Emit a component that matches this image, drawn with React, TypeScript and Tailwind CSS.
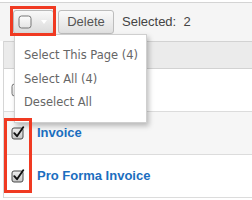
import React from "react";

function CheckedBox() {
  return (
    <svg width="14" height="14" viewBox="0 0 14 14" className="block">
      <defs>
        <linearGradient id="cbg" x1="0" y1="0" x2="0" y2="1">
          <stop offset="0" stopColor="#f2f2f2" />
          <stop offset="1" stopColor="#c4c4c4" />
        </linearGradient>
      </defs>
      <rect x="1" y="2" width="11" height="11" rx="2" fill="url(#cbg)" stroke="#4a4a4a" strokeWidth="1" />
      <path d="M3.3 7.2 L6 10.2 L12.2 1.2" fill="none" stroke="#111" strokeWidth="1.9" strokeLinecap="round" strokeLinejoin="round" />
    </svg>
  );
}

function EmptyBox() {
  return (
    <svg width="14" height="14" viewBox="0 0 14 14" className="block">
      <defs>
        <linearGradient id="ebg" x1="0" y1="0" x2="0" y2="1">
          <stop offset="0" stopColor="#fdfdfd" />
          <stop offset="1" stopColor="#e4e4e4" />
        </linearGradient>
      </defs>
      <rect x="1" y="1" width="12" height="12" rx="2.5" fill="url(#ebg)" stroke="#777" strokeWidth="1" />
    </svg>
  );
}

export default function App() {
  return (
    <div className="relative w-[252px] h-[200px] bg-white overflow-hidden" style={{ fontFamily: '"Liberation Sans", Arial, sans-serif' }}>
      <div className="pt-[2px]">
        {/* toolbar */}
        <div className="h-[39px] border-t border-[#d4d4d4] bg-[#f5f5f5] flex items-center pl-[13px]">
          <div className="w-[41px] h-[24px] rounded-[3px] border border-[#b9b9b9] bg-gradient-to-b from-[#f9f9f9] to-[#dadada] flex items-center pl-[4px] gap-[9px]">
            <EmptyBox />
            <div className="w-0 h-0 border-l-[3.5px] border-r-[3.5px] border-t-[4px] border-l-transparent border-r-transparent border-t-white" />
          </div>
          <div className="ml-[4px] w-[56px] h-[24px] rounded-[3px] border border-[#bdbdbd] bg-gradient-to-b from-[#fafafa] to-[#e0e0e0] flex items-center justify-center text-[13px] text-[#555]">
            Delete
          </div>
          <div className="ml-[8px] text-[13px] text-[#444]">Selected:&nbsp; 2</div>
        </div>
        {/* table */}
        <div className="ml-[3px] border-l border-[#d6d6d6]">
          <div className="h-[28px] border-t border-b border-[#d2d2d2] bg-[#ebebeb]" />
          <div className="h-[43px] border-b border-[#dcdcdc] bg-white flex items-center pl-[7px]">
            <EmptyBox />
          </div>
          <div className="h-[43px] border-b border-[#dcdcdc] bg-[#f6f6f6] flex items-center pl-[7px] gap-[12px]">
            <CheckedBox />
            <span className="text-[13px] font-bold text-[#1b6ebf]">Invoice</span>
          </div>
          <div className="h-[43px] border-b border-[#dcdcdc] bg-white flex items-center pl-[7px] gap-[12px]">
            <CheckedBox />
            <span className="text-[13px] font-bold text-[#1b6ebf]">Pro Forma Invoice</span>
          </div>
        </div>
      </div>

      {/* dropdown menu */}
      <div
        className="absolute left-[14px] top-[34px] w-[133px] h-[89px] bg-white border border-[#cfcfcf] shadow-[2px_3px_5px_rgba(0,0,0,0.25)] pt-[9px] text-[11.5px] text-[#666]"
        style={{ fontFamily: '"DejaVu Sans", sans-serif' }}
      >
        <div className="h-[23.5px] flex items-center pl-[9px]">Select This Page (4)</div>
        <div className="h-[23.5px] flex items-center pl-[9px]">Select All (4)</div>
        <div className="h-[23.5px] flex items-center pl-[9px]">Deselect All</div>
      </div>

      {/* red highlight boxes */}
      <div className="absolute left-[10px] top-[6px] w-[46px] h-[30px] border-[3px] border-[#f03a22]" />
      <div className="absolute left-[4px] top-[118px] w-[28px] h-[75px] border-[3px] border-[#f03a22]" />
    </div>
  );
}
